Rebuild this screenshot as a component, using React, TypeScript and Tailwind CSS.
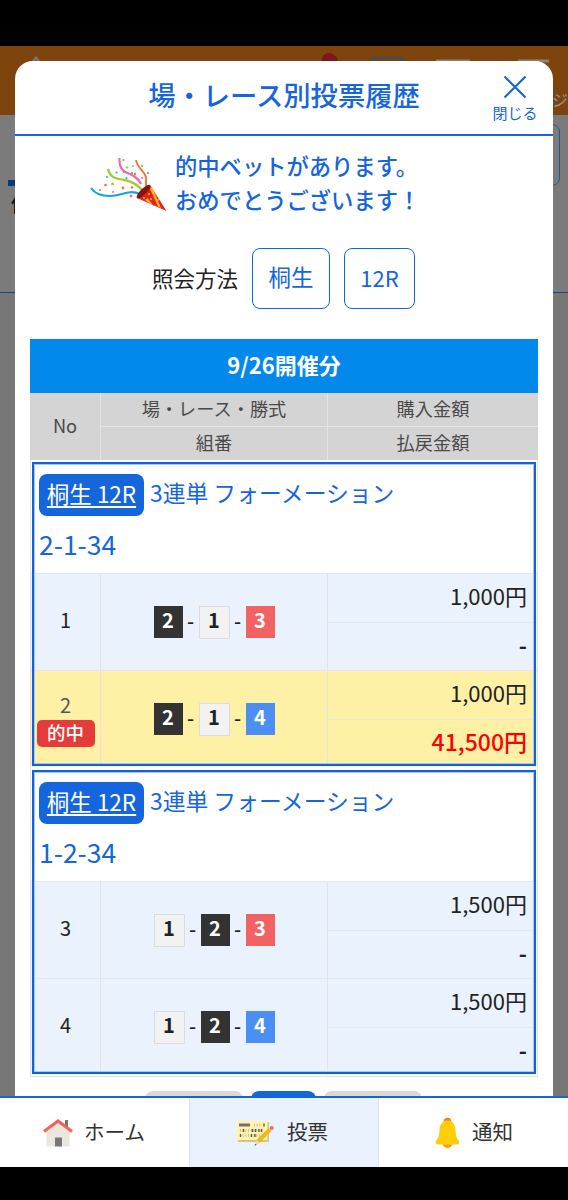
type Chip = 1 | 2 | 3 | 4;

type Bet = {
  no: number;
  chips: Chip[];
  amount: string;
  payout: string;
  hit?: boolean;
};

type BetGroup = {
  place: string;
  type: string;
  numbers: string;
  bets: Bet[];
};

const groups: BetGroup[] = [
  {
    place: "桐生 12R",
    type: "3連単 フォーメーション",
    numbers: "2-1-34",
    bets: [
      { no: 1, chips: [2, 1, 3], amount: "1,000円", payout: "-" },
      { no: 2, chips: [2, 1, 4], amount: "1,000円", payout: "41,500円", hit: true },
    ],
  },
  {
    place: "桐生 12R",
    type: "3連単 フォーメーション",
    numbers: "1-2-34",
    bets: [
      { no: 3, chips: [1, 2, 3], amount: "1,500円", payout: "-" },
      { no: 4, chips: [1, 2, 4], amount: "1,500円", payout: "-" },
    ],
  },
];

// boat colors
const chipColors: Record<Chip, string> = {
  1: "w-[31px] h-[33px] bg-[#f2f2f2] border border-[#dcdcdc] text-[#222]",
  2: "w-[29px] h-8 bg-[#333] text-white",
  3: "w-[29px] h-8 bg-[#f26262] text-white",
  4: "w-[29px] h-8 bg-[#4b8ff5] text-white",
};

const Popper = () => (
  <svg width="78" height="56" viewBox="0 0 78 56" fill="none">
    <path d="M1 30C5 36 12 38 20 38C32 38 38 31 50 36" stroke="#0da5e8" strokeWidth="2.2" />
    <path d="M18 11C20 20 27 21 35 22C44 24 49 28 53 33" stroke="#a4cb34" strokeWidth="2.4" />
    <path d="M29.5 0C29 12 34 14 40 16C46 19 49 21 51 26" stroke="#ea6cab" strokeWidth="2.2" />
    <path d="M46 2C47 10 54 12 56 19L56 28" stroke="#f17436" strokeWidth="1.9" />
    <path d="M47 40L60 27L76.5 53Z" fill="#e0231e" />
    <path d="M61 29L63.5 32L71 50L68 48.5L60 31ZM55 42L57.5 40L63 47L60.5 46.3Z" fill="#f9b21d" />
    <ellipse cx="53.5" cy="33.5" rx="3" ry="9.2" transform="rotate(45 53.5 33.5)" fill="#851311" />
    <g fill="#f9b21d">
      <circle cx="59" cy="36" r="1" />
      <circle cx="54" cy="40" r="1" />
      <circle cx="61" cy="41" r="1" />
      <circle cx="68" cy="42" r="1" />
    </g>
    <g fill="#f06ba8">
      <circle cx="10" cy="32" r="1.1" />
      <circle cx="23" cy="34" r="1.1" />
      <circle cx="41" cy="38" r="1.4" />
      <circle cx="34" cy="14" r="1" />
      <circle cx="52" cy="20" r="1" />
    </g>
    <g fill="#f17436">
      <circle cx="15.5" cy="27" r="1.3" />
      <circle cx="33" cy="30" r="1.4" />
      <circle cx="42" cy="29.5" r="1.2" />
      <circle cx="45" cy="16" r="1.2" />
      <circle cx="33.5" cy="2" r="1" />
      <circle cx="52" cy="8" r="1" />
    </g>
    <g fill="#a4cb34">
      <circle cx="22.5" cy="26" r="1.5" />
      <circle cx="37" cy="9.5" r="1.2" />
      <circle cx="43" cy="8" r="1" />
    </g>
    <g fill="#27ace6">
      <circle cx="26.5" cy="14.5" r="1.1" />
      <circle cx="17" cy="19" r="1" />
      <circle cx="36.5" cy="20" r="1.1" />
      <circle cx="42" cy="15" r="1.1" />
      <circle cx="58" cy="15" r="1.1" />
    </g>
  </svg>
);

const HomeIcon = () => (
  <svg width="30" height="28" viewBox="0 0 30 28" fill="none">
    <path d="M22 1H25V11L22 8Z" fill="#777" />
    <path d="M3.5 13L15 4L26.5 13V27.5H3.5Z" fill="#ebe7df" />
    <path d="M1 12.5L15 2L29 12.5" stroke="#f26359" strokeWidth="3.2" />
    <path d="M12 18.5H19V27.5H12Z" fill="#777" />
  </svg>
);

const VoteIcon = () => (
  <svg width="38" height="28" viewBox="0 0 38 28">
    <path d="M2 4L33 3V23H2Z" fill="#d3c681" />
    <path d="M.5 2H31.5V21H.5Z" fill="#fff3b2" />
    <path d="M3 4.5H14V7.5H3Z" fill="#737066" />
    <path
      d="M18 6H26M4 11.5H28M4 16.5H26"
      stroke="#cdc392"
      strokeWidth="3.2"
      strokeDasharray="1 1.7"
    />
    <path
      d="M28 4.5V7.5M7.5 10V13M16.5 10V13M19.5 10V13M23 10V13M25.5 10V13M4.5 15V18M15.5 15V18M19 15V18"
      stroke="#5d5a50"
      strokeWidth="1.4"
    />
    <path d="M32.5 9L35.5 12L23.5 24L20.5 21Z" fill="#efb91a" />
    <path d="M20.5 21L23.5 24L19 26.5Z" fill="#eedbb2" />
    <path d="M19 24.8L20.7 25.5L18.7 26.8Z" fill="#555" />
    <circle cx="35.7" cy="9" r="2.1" fill="#f26c62" />
  </svg>
);

const BellIcon = () => (
  <svg width="25" height="32" viewBox="0 0 25 32">
    <circle cx="12.5" cy="4.5" r="3.8" fill="#f58416" />
    <path d="M7.5 26H17.5A5 5 0 0 1 7.5 26Z" fill="#fa9c0c" />
    <path
      d="M12.5 3.5C7 3.5 4.8 8 4.5 13C4.2 18 3.8 20.5 1.2 23.8C0 25.5.7 27.5 2.5 27.5H22.5C24.3 27.5 25 25.5 23.8 23.8C21.2 20.5 20.8 18 20.5 13C20.2 8 18 3.5 12.5 3.5Z"
      fill="#ffce08"
    />
  </svg>
);

const BetRow = ({ bet }: { bet: Bet }) => (
  <div
    className={`flex h-[97px] border-t border-[#e3e6ea] ${bet.hit ? "bg-[#fef0a5]" : "bg-[#eaf2fe]"}`}
  >
    <div className="w-[70px] border-r border-[#e3e3e3] flex flex-col items-center justify-center text-[20px] text-[#222]">
      {bet.hit ? (
        <>
          <span className="leading-[30px] text-[#555]">{bet.no}</span>
          <span className="w-[58px] h-[27px] leading-[25px] rounded-[5px] bg-[#e53b3b] text-white text-[18.5px] text-center font-medium mb-px">
            的中
          </span>
        </>
      ) : (
        <span className="leading-[30px] mb-1">{bet.no}</span>
      )}
    </div>
    <div className="w-[227px] border-r border-[#e3e3e3] flex items-center justify-center text-[20px] font-medium text-[#222]">
      {bet.chips.map((chip, i) => (
        <div key={i} className="flex items-center">
          {i > 0 && <span className="w-4 text-center leading-8 pb-0.5">-</span>}
          <span className={`flex items-center justify-center pb-[5px] font-bold ${chipColors[chip]}`}>
            {chip}
          </span>
        </div>
      ))}
    </div>
    <div className="flex-1 flex flex-col text-right text-[22px] text-[#222]">
      <div className="h-[49px] leading-[42px] pr-2.5 border-b border-[#e3e6ea]">{bet.amount}</div>
      {bet.hit ? (
        <div className="leading-[42px] pr-2.5 text-[23px] font-medium text-[#ff0000]">{bet.payout}</div>
      ) : (
        <div className="leading-[43px] pr-2.5 font-bold">{bet.payout}</div>
      )}
    </div>
  </div>
);

const Group = ({ group }: { group: BetGroup }) => (
  <div className="relative h-[308px] border-x border-[#e3e6ea] after:absolute after:left-px after:right-px after:top-[2px] after:bottom-[2px] after:border-2 after:border-[#1262d9] after:shadow-[inset_0_0_0_1px_#a9c6f2]">
    <div className="h-[113px] pl-2 pt-3.5 text-[#1565dc]">
      <div className="flex items-center gap-1.5 text-[22.5px]">
        <button className="h-[42px] w-[105px] pb-1 rounded-lg bg-[#1565dc] text-white underline underline-offset-[3px] decoration-[1.5px] leading-[38px] whitespace-nowrap">
          {group.place}
        </button>
        <span className="leading-[38px] pb-1 text-[22.8px]">{group.type}</span>
      </div>
      <p className="text-[26.5px] leading-[40px] mt-2">{group.numbers}</p>
    </div>
    {group.bets.map((bet) => (
      <BetRow key={bet.no} bet={bet} />
    ))}
  </div>
);

const Modal = () => (
  <div className="absolute left-[15px] top-[15px] bottom-0 w-[538px] rounded-t-[18px] bg-white overflow-hidden">
    {/* title */}
    <header className="relative h-[75px] border-b-2 border-[#1565dc] text-[#1565dc] text-center">
      <h1 className="text-[27.3px] leading-[67px] font-medium">場・レース別投票履歴</h1>
      <button className="absolute right-[15px] top-[14px] w-[46px] flex flex-col items-center">
        <svg width="24" height="24" viewBox="0 0 24 24" stroke="currentColor" strokeWidth="2.2">
          <path d="M1.5 1.5L22.5 22.5M22.5 1.5L1.5 22.5" />
        </svg>
        <span className="text-[15px] leading-[22px] mt-[3px] whitespace-nowrap">閉じる</span>
      </button>
    </header>

    {/* hit message */}
    <div className="flex mt-3 pl-[75px] text-[#1565dc] text-[22.3px] font-medium">
      <div className="mt-[10px] mr-[7px]">
        <Popper />
      </div>
      <p className="leading-[34px] whitespace-nowrap">
        的中ベットがあります。
        <br />
        おめでとうございます！
      </p>
    </div>

    {/* filter */}
    <div className="flex items-center mt-8 pl-[137px] text-[#222] text-[21.5px]">
      <span className="w-[100px]">照会方法</span>
      <button className="w-[78px] h-[61px] pb-[3px] rounded-lg border border-[#1565dc] text-[#1565dc] text-[22.5px]">
        桐生
      </button>
      <button className="w-[71px] h-[61px] pb-[3px] ml-[14px] rounded-lg border border-[#1565dc] text-[#1565dc] text-[22px]">
        12R
      </button>
    </div>

    {/* history */}
    <div className="mx-[15px] mt-[30px]">
      <h2 className="h-[54px] leading-[50px] bg-[#0388ec] text-white text-center text-[22px] font-bold">
        9/26開催分
      </h2>
      <div className="flex h-[67px] bg-[#d4d4d4] text-[#4a4a4a] text-[18.2px] text-center">
        <div className="w-[71px] leading-[65px] border-r border-[#e4e4e4]">No</div>
        <div className="w-[227px] border-r border-[#e4e4e4]">
          <div className="h-[34px] leading-[30px] border-b border-[#e4e4e4]">場・レース・勝式</div>
          <div className="leading-[30px]">組番</div>
        </div>
        <div className="flex-1">
          <div className="h-[34px] leading-[30px] border-b border-[#e4e4e4]">購入金額</div>
          <div className="leading-[30px]">払戻金額</div>
        </div>
      </div>
      <div className="border-b border-[#dde2ea]">
        {groups.map((group) => (
          <Group key={group.numbers} group={group} />
        ))}
      </div>
      {/* pager */}
      <div className="flex gap-2 justify-center mt-[14px] pr-px">
        <div className="w-[98px] h-10 rounded-lg bg-[#d9d9d9]" />
        <div className="w-[65px] h-10 rounded-lg bg-[#1565dc]" />
        <div className="w-[98px] h-10 rounded-lg bg-[#d9d9d9]" />
      </div>
    </div>
  </div>
);

const App = () => {
  return (
    <div className="w-[568px] h-[1200px] bg-black flex flex-col overflow-hidden font-['Noto_Sans_CJK_JP',sans-serif]">
      <main className="relative mt-[46px] h-[1050px] bg-[#777] overflow-hidden">
        {/* dimmed page behind the dialog */}
        <div className="relative h-[69px] bg-[#7d440d]">
          <svg className="absolute left-0 top-0" width="568" height="69" fill="none">
            <path d="M28 21L36 12L44 21" stroke="#777" strokeWidth="2.5" />
            <path d="M322 20V12Q324 7 330 7Q338 9 338 18V20Z" fill="#7d171b" />
            <path d="M373 20V12H403V20" stroke="#4b4b4b" strokeWidth="3" />
            <path d="M436 15H470M518 15H549" stroke="#8b8378" strokeWidth="3" />
          </svg>
          <span className="absolute right-0 top-[42px] text-[16px] leading-[22px] text-[#999]">ジ</span>
        </div>
        <div className="relative h-[178px] border-b border-[#174582] bg-[#7b7b7b]">
          <div className="absolute right-2 top-[9px] w-[60px] h-[62px] rounded-lg border border-[#28558f]" />
          <div className="absolute left-2 top-[65px] w-20 h-1.5 bg-[#08387d]" />
          <span className="absolute left-[11px] top-[75px] text-[20px] leading-[28px] font-medium text-[#181818]">
            他
          </span>
        </div>
        <Modal />
      </main>

      <nav className="flex h-[71px] border-t-2 border-[#1565dc] bg-white text-[#333] text-[20.5px]">
        <div className="w-[190px] border-r border-[#e0e3e8] flex items-center pl-[43px] gap-[11px]">
          <HomeIcon />
          <span className="pb-[3px]">ホーム</span>
        </div>
        <div className="w-[189px] border-r border-[#e0e3e8] bg-[#eaf2fe] flex items-center pl-[46px] gap-[13px]">
          <VoteIcon />
          <span className="pb-[3px]">投票</span>
        </div>
        <div className="flex-1 flex items-center pl-[56px] gap-3">
          <BellIcon />
          <span className="pb-[3px]">通知</span>
        </div>
      </nav>
    </div>
  );
};

export default App;
